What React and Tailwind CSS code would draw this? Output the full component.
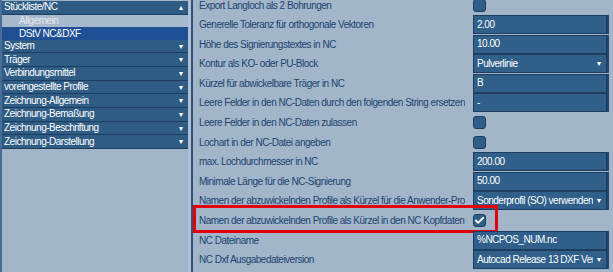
import { Check } from "lucide-react";

const groups = [
  { name: "System" },
  { name: "Träger" },
  { name: "Verbindungsmittel" },
  { name: "voreingestellte Profile" },
  { name: "Zeichnung-Allgemein" },
  { name: "Zeichnung-Bemaßung" },
  { name: "Zeichnung-Beschriftung" },
  { name: "Zeichnung-Darstellung" },
];

const rows = [
  { label: "Export Langloch als 2 Bohrungen", type: "check" },
  { label: "Generelle Toleranz für orthogonale Vektoren", type: "text", value: "2.00" },
  { label: "Höhe des Signierungstextes in NC", type: "text", value: "10.00" },
  { label: "Kontur als KO- oder PU-Block", type: "select", value: "Pulverlinie" },
  { label: "Kürzel für abwickelbare Träger in NC", type: "text", value: "B" },
  { label: "Leere Felder in den NC-Daten durch den folgenden String ersetzen", type: "text", value: "-" },
  { label: "Leere Felder in den NC-Daten zulassen", type: "check" },
  { label: "Lochart in der NC-Datei angeben", type: "check" },
  { label: "max. Lochdurchmesser in NC", type: "text", value: "200.00" },
  { label: "Minimale Länge für die NC-Signierung", type: "text", value: "50.00" },
  { label: "Namen der abzuwickelnden Profile als Kürzel für die Anwender-Profile", type: "select", value: "Sonderprofil (SO) verwenden" },
  { label: "Namen der abzuwickelnden Profile als Kürzel in den NC Kopfdaten", type: "check", checked: true, marked: true },
  { label: "NC Dateiname", type: "text", value: "%NCPOS_NUM.nc" },
  { label: "NC Dxf Ausgabedateiversion", type: "select", value: "Autocad Release 13 DXF Version" },
];

function Header({ name, open }) {
  return (
    <div className="flex h-[13.7px] items-center justify-between border-b border-[#1d3d60] bg-[#2f5c85] pl-[2px] pr-[4px] text-white">
      <span className="leading-none">{name}</span>
      <span className="text-[7px] leading-none">{open ? "▲" : "▼"}</span>
    </div>
  );
}

function Control({ row }) {
  if (row.type === "check") {
    return (
      <div className="flex h-[13px] w-[13px] items-center justify-center rounded-[3px] border border-[#1d3d60] bg-[#2f5e88]">
        {row.checked && <Check size={11} strokeWidth={4} className="text-white" />}
      </div>
    );
  }
  return (
    <div className="flex h-[19px] w-[134px] shrink-0 items-center border border-[#1d3d60] bg-[#30608a] pl-[3px] pr-[4px] text-white shadow-[2px_0_0_#22466b]">
      <span className="min-w-0 flex-1 overflow-hidden whitespace-nowrap leading-[12px]">{row.value}</span>
      {row.type === "select" && <span className="ml-[3px] text-[7px] leading-none">▼</span>}
    </div>
  );
}

export default function App() {
  return (
    <div
      className="flex h-[272px] w-[613px] overflow-hidden bg-[#a2b5c9] text-[10px] tracking-[-0.5px]"
      style={{ fontFamily: '"Liberation Sans", Arial, sans-serif' }}
    >
      <div className="flex w-[188px] shrink-0 flex-col border-l-2 border-[#4a6d95] bg-[#a1b4c8] pt-[1px]">
        <Header name="Stückliste/NC" open />
        <div className="flex h-[12.3px] items-center bg-[#a7bacd] pl-[17px] text-[#e3e9f0]">Allgemein</div>
        <div className="flex h-[12.7px] items-center bg-[#1f4f94] pl-[17px] text-white">DStV NC&amp;DXF</div>
        {groups.map((g) => (
          <Header key={g.name} name={g.name} />
        ))}
      </div>
      <div className="w-[3px] shrink-0 bg-[#b0c1d3]" />
      <div className="w-[2px] shrink-0 bg-[#2f5179]" />
      <div className="mt-[-4.8px] flex flex-1 flex-col">
        {rows.map((row) => (
          <div key={row.label} className="relative flex h-[19.6px] shrink-0 items-center pl-[6px]">
            <div className="mr-[8px] w-[266px] shrink-0 overflow-hidden whitespace-nowrap text-[#20446f]">{row.label}</div>
            <Control row={row} />
            {row.marked && (
              <div className="absolute left-0 top-[-6px] h-[28px] w-[305px] border-[3px] border-[#e2000b]" />
            )}
          </div>
        ))}
      </div>
    </div>
  );
}
